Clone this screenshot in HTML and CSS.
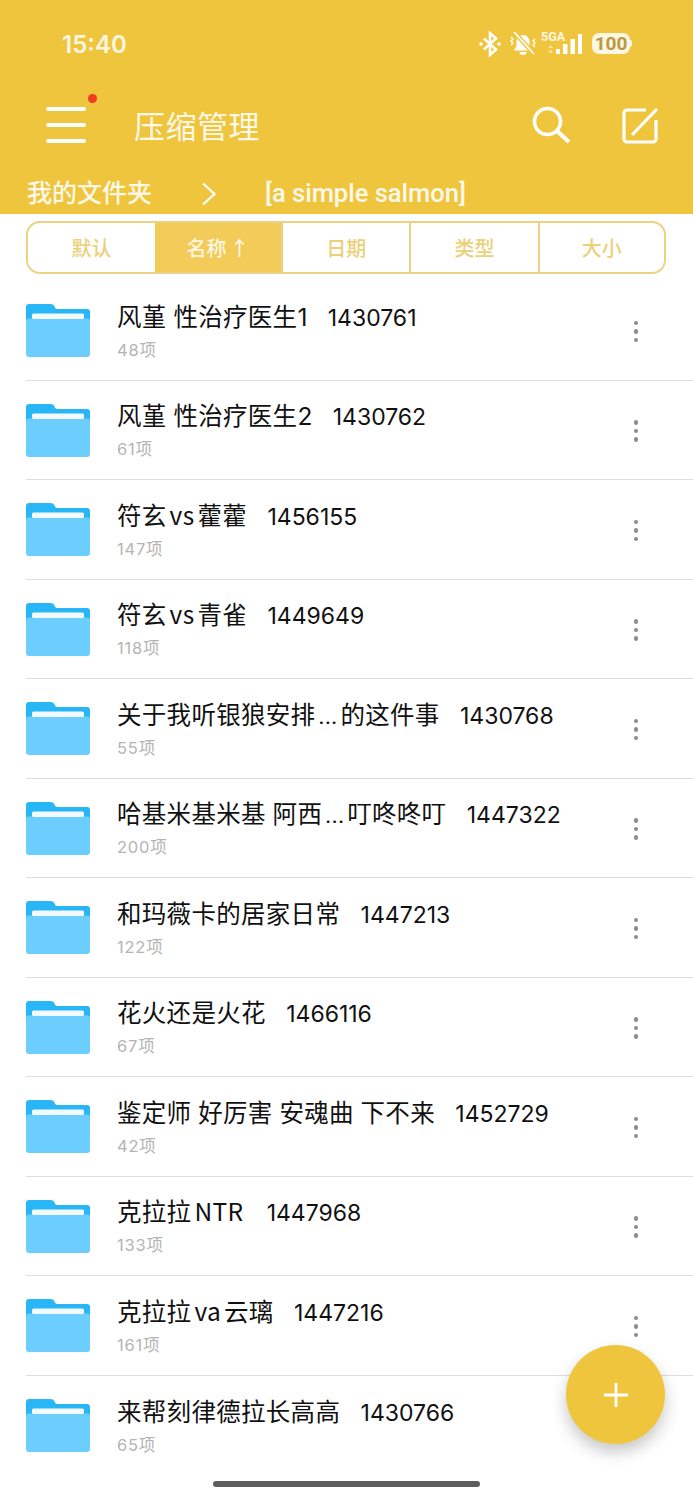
FILE: index.html
```html
<!DOCTYPE html>
<html lang="zh">
<head>
<meta charset="utf-8">
<title>压缩管理</title>
<link rel="stylesheet" href="styles.css">
</head>
<body>
<div class="page">
  <header class="header">
    <div class="status">
      <span class="time">15:40</span>
      <div class="status-icons">
        <svg class="ic-bt" viewBox="0 0 22 26" width="22" height="26"><path d="M5 7.500l12 11-6 5.500V2l6 5.500-12 11" fill="none" stroke="#fff" stroke-width="2.500"/><circle cx="2" cy="13" r="1.800" fill="#fff"/><circle cx="20" cy="13" r="1.800" fill="#fff"/></svg>
        <svg class="ic-bell" viewBox="0 0 28 24" width="28" height="24"><path d="M14 3c-4 0-6.500 3-6.500 6.500v4.500L5 18.500h18L20.500 14V9.500C20.500 6 18 3 14 3z" fill="#fff"/><path d="M10.500 20a3.500 3 0 007 0z" fill="#fff"/><path d="M5 0l20 22" stroke="#f0c53e" stroke-width="4.500"/><path d="M5 0l20 22" stroke="#fff" stroke-width="1.800"/><path d="M2 5l2 2-2 2 2 2-2 2M26 7l-2 2 2 2-2 2 2 2" fill="none" stroke="#fff" stroke-width="1.300"/></svg>
        <div class="signal">
          <span class="net">5GA</span>
          <svg viewBox="0 0 42 23" width="42" height="23"><path d="M7 16l2.500-3 2.500 3zM7 18.500l2.500 3 2.500-3z" fill="#f8e6ab"/><rect x="15" y="17" width="4" height="5" fill="#fff"/><rect x="22" y="12" width="4.500" height="10" fill="#fff"/><rect x="29.500" y="7" width="4.500" height="15" fill="#fff"/><rect x="37" y="2" width="4" height="20" fill="#fff"/></svg>
        </div>
        <div class="battery"><span class="battery-num">100</span></div>
      </div>
    </div>
    <div class="toolbar">
      <div class="menu">
        <span class="menu-line"></span><span class="menu-line"></span><span class="menu-line"></span>
        <span class="menu-dot"></span>
      </div>
      <h1 class="title">压缩管理</h1>
      <svg class="tool-search" viewBox="0 0 40 40" width="40" height="40"><circle cx="16.500" cy="16.500" r="13" fill="none" stroke="#fff" stroke-width="3.600"/><path d="M26 26l12 11" stroke="#fff" stroke-width="4"/></svg>
      <svg class="tool-edit" viewBox="0 0 37 37" width="37" height="37"><path d="M24 3H5a3 3 0 00-3 3v26a3 3 0 003 3h26a3 3 0 003-3V13" fill="none" stroke="#fff" stroke-width="3.200"/><path d="M35 2L10 28" stroke="#fff" stroke-width="3.200"/></svg>
    </div>
    <div class="crumbs">
      <span class="crumb-root">我的文件夹</span>
      <svg class="crumb-arrow" viewBox="0 0 16 24" width="16" height="24"><path d="M2 1.500l11.500 10.500L2 22.500" fill="none" stroke="#fff" stroke-width="2.200"/></svg>
      <span class="crumb-leaf">[a simple salmon]</span>
    </div>
  </header>

  <div class="tabs">
    <div class="tab">默认</div>
    <div class="tab tab-on">名称<span class="tab-arrow">↑</span></div>
    <div class="tab">日期</div>
    <div class="tab">类型</div>
    <div class="tab">大小</div>
  </div>

  <ul class="list">
    <li class="row"><svg class="folder" viewBox="0 0 64 54"><use href="#folder"/></svg><div class="info"><div class="name">风堇 性治疗医生<span class="ord">1</span>&nbsp;&nbsp;&nbsp;<span class="id">1430761</span></div><div class="count">48项</div></div><div class="more"><i></i><i></i><i></i></div></li>
    <li class="row"><svg class="folder" viewBox="0 0 64 54"><use href="#folder"/></svg><div class="info"><div class="name">风堇 性治疗医生<span class="ord">2</span>&nbsp;&nbsp;&nbsp;<span class="id">1430762</span></div><div class="count">61项</div></div><div class="more"><i></i><i></i><i></i></div></li>
    <li class="row"><svg class="folder" viewBox="0 0 64 54"><use href="#folder"/></svg><div class="info"><div class="name">符玄<span class="lat">vs</span>藿藿&nbsp;&nbsp;&nbsp;<span class="id">1456155</span></div><div class="count">147项</div></div><div class="more"><i></i><i></i><i></i></div></li>
    <li class="row"><svg class="folder" viewBox="0 0 64 54"><use href="#folder"/></svg><div class="info"><div class="name">符玄<span class="lat">vs</span>青雀&nbsp;&nbsp;&nbsp;<span class="id">1449649</span></div><div class="count">118项</div></div><div class="more"><i></i><i></i><i></i></div></li>
    <li class="row"><svg class="folder" viewBox="0 0 64 54"><use href="#folder"/></svg><div class="info"><div class="name">关于我听银狼安排<span class="ell">...</span>的这件事&nbsp;&nbsp;&nbsp;<span class="id">1430768</span></div><div class="count">55项</div></div><div class="more"><i></i><i></i><i></i></div></li>
    <li class="row"><svg class="folder" viewBox="0 0 64 54"><use href="#folder"/></svg><div class="info"><div class="name">哈基米基米基 阿西<span class="ell">...</span>叮咚咚叮&nbsp;&nbsp;&nbsp;<span class="id">1447322</span></div><div class="count">200项</div></div><div class="more"><i></i><i></i><i></i></div></li>
    <li class="row"><svg class="folder" viewBox="0 0 64 54"><use href="#folder"/></svg><div class="info"><div class="name">和玛薇卡的居家日常&nbsp;&nbsp;&nbsp;<span class="id">1447213</span></div><div class="count">122项</div></div><div class="more"><i></i><i></i><i></i></div></li>
    <li class="row"><svg class="folder" viewBox="0 0 64 54"><use href="#folder"/></svg><div class="info"><div class="name">花火还是火花&nbsp;&nbsp;&nbsp;<span class="id">1466116</span></div><div class="count">67项</div></div><div class="more"><i></i><i></i><i></i></div></li>
    <li class="row"><svg class="folder" viewBox="0 0 64 54"><use href="#folder"/></svg><div class="info"><div class="name">鉴定师 好厉害 安魂曲 下不来&nbsp;&nbsp;&nbsp;<span class="id">1452729</span></div><div class="count">42项</div></div><div class="more"><i></i><i></i><i></i></div></li>
    <li class="row"><svg class="folder" viewBox="0 0 64 54"><use href="#folder"/></svg><div class="info"><div class="name">克拉拉<span class="lat">NTR</span>&nbsp;&nbsp;&nbsp;<span class="id">1447968</span></div><div class="count">133项</div></div><div class="more"><i></i><i></i><i></i></div></li>
    <li class="row"><svg class="folder" viewBox="0 0 64 54"><use href="#folder"/></svg><div class="info"><div class="name">克拉拉<span class="lat">va</span>云璃&nbsp;&nbsp;&nbsp;<span class="id">1447216</span></div><div class="count">161项</div></div><div class="more"><i></i><i></i><i></i></div></li>
    <li class="row"><svg class="folder" viewBox="0 0 64 54"><use href="#folder"/></svg><div class="info"><div class="name">来帮刻律德拉长高高&nbsp;&nbsp;&nbsp;<span class="id">1430766</span></div><div class="count">65项</div></div></li>
  </ul>

  <div class="fab"><svg viewBox="0 0 26 26" width="26" height="26"><path d="M13 1v24M1 13h24" stroke="#fff" stroke-width="2.800"/></svg></div>
  <div class="home-bar"></div>

  <svg class="defs" width="0" height="0">
    <symbol id="folder" viewBox="0 0 64 54">
      <path d="M0 4a3 3 0 013-3h21c3 0 4 1 5 3.500 .5 1.500 1.500 1.500 3 1.500h29a3 3 0 013 3v10H0z" fill="#29b6f6"/>
      <path d="M0 18c0-1.500 1-2.500 2.500-2.500h59c1.500 0 2.500 1 2.500 2.500v33a3 3 0 01-3 3H3a3 3 0 01-3-3z" fill="#6cceff"/>
      <rect x="6" y="10.500" width="52" height="5.500" rx="1.500" fill="#f2faff"/>
    </symbol>
  </svg>
</div>
</body>
</html>
```
FILE: styles.css
```css
* { box-sizing: border-box; }
html, body { margin: 0; padding: 0; background: #fff; }
.page {
  position: relative;
  width: 693px;
  height: 1500px;
  overflow: hidden;
  font-family: "Noto Sans CJK SC", "Noto Sans", sans-serif;
  background: #fff;
}
.header {
  height: 214px;
  background: #f0c53e;
  color: #fff;
  display: flex;
  flex-direction: column;
}
.status {
  height: 87px;
  flex: none;
  display: flex;
  align-items: center;
  justify-content: space-between;
  padding: 0 61px 0 62px;
}
.time {
  margin-top: 2px;
  font-family: "Inter", "Roboto", sans-serif;
  font-size: 24px;
  font-weight: 600;
  color: #fdf6e0;
}
.status-icons { display: flex; align-items: center; }
.ic-bell { margin-left: 8px; }
.signal {
  position: relative;
  width: 42px;
  height: 23px;
  margin-left: 4px;
  display: flex;
  align-items: flex-end;
}
.net {
  position: absolute;
  left: 0;
  top: -1px;
  font-family: "Roboto", sans-serif;
  font-size: 12.500px;
  font-weight: 700;
  color: #fdf6e0;
  line-height: 12px;
}
.battery {
  position: relative;
  width: 38px;
  height: 21px;
  margin-left: 9px;
  margin-right: 2px;
  border-radius: 7px;
  background: #fdf6e0;
  display: flex;
  align-items: center;
  justify-content: center;
}
.battery::after {
  content: "";
  position: absolute;
  right: -2px;
  top: 7px;
  width: 2px;
  height: 7px;
  border-radius: 0 2px 2px 0;
  background: #fdf6e0;
}
.battery-num {
  font-family: "Roboto", sans-serif;
  font-size: 19px;
  font-weight: 700;
  color: #b79a45;
  line-height: 21px;
}
.toolbar {
  height: 76px;
  flex: none;
  display: flex;
  align-items: center;
  padding-left: 46px;
}
.menu {
  position: relative;
  width: 40px;
  height: 36px;
  display: flex;
  flex-direction: column;
  justify-content: space-between;
}
.menu-line { height: 4px; border-radius: 2px; background: #fff; }
.menu-dot {
  position: absolute;
  right: -11px;
  top: -13px;
  width: 9px;
  height: 9px;
  border-radius: 50%;
  background: #f53a22;
}
.title {
  margin: 0 0 0 48px;
  width: 397px;
  font-size: 31px;
  font-weight: 400;
  line-height: 40px;
  letter-spacing: 0.500px;
  color: #fdf8e8;
}
.tool-search { margin-right: 51px; }
.crumbs {
  flex: 1;
  display: flex;
  align-items: center;
  padding: 10px 0 0 27px;
  font-size: 25px;
  color: #fdf8e8;
}
.crumb-root { font-weight: 500; width: 174px; margin-bottom: 6px; }
.crumb-arrow { flex: none; }
.crumb-leaf {
  margin-left: 48px;
  margin-bottom: 2px;
  font-family: "Roboto", sans-serif;
  font-size: 25.500px;
  font-weight: 500;
}
.tabs {
  display: flex;
  margin: 7px 27px 0 26px;
  height: 53px;
  border: 2px solid #ecd384;
  border-radius: 14px;
  overflow: hidden;
}
.tab {
  flex: 1;
  display: flex;
  align-items: center;
  justify-content: center;
  font-size: 20px;
  font-weight: 500;
  color: #ecd07a;
  border-left: 2px solid #ecd384;
}
.tab:first-child { flex: none; width: 127px; border-left: 0; }
.tab:last-child { flex: none; width: 126.500px; }
.tab-on {
  background: #f2cb58;
  color: #fdf6e0;
  border-left: 0;
}
.tab-arrow { margin-left: 3px; }
.list {
  list-style: none;
  margin: 0;
  padding: 7px 0 0 0;
}
.row {
  position: relative;
  height: 99.500px;
  margin-left: 26px;
  display: flex;
  align-items: center;
  border-bottom: 1.500px solid #dedede;
}
.row:last-child { border-bottom: 0; }
.folder { flex: none; width: 64px; height: 54px; }
.info { margin-left: 27px; flex: 1; min-width: 0; }
.name {
  margin-top: 1px;
  font-size: 24.500px;
  line-height: 30px;
  letter-spacing: 0.300px;
  word-spacing: 1px;
  color: #111;
  white-space: nowrap;
}
.id { font-family: "Inter", "Roboto", sans-serif; font-size: 23px; letter-spacing: 0; }
.ord { font-family: "Inter", "Roboto", sans-serif; font-size: 24.500px; letter-spacing: 0; }
.lat { margin: 0 3px; }
.ell {
  display: inline-block;
  width: 25px;
  text-align: center;
  font-family: "Roboto", sans-serif;
  letter-spacing: 0;
}
.count {
  font-family: "Inter", "Noto Sans CJK SC", sans-serif;
  font-size: 16.500px;
  line-height: 22px;
  letter-spacing: 0.800px;
  margin-top: 6px;
  color: #b4b4b4;
}
.more {
  display: flex;
  flex-direction: column;
  gap: 4px;
  margin-right: 55px;
  margin-top: 2px;
}
.more i { display: block; width: 4.500px; height: 4.500px; border-radius: 50%; background: #8c8c8c; }
.fab {
  position: absolute;
  left: 566px;
  top: 1345px;
  width: 99px;
  height: 99px;
  border-radius: 50%;
  background: #f0c53e;
  box-shadow: 0 8px 16px rgba(0, 0, 0, 0.22);
  display: flex;
  align-items: center;
  justify-content: center;
}
.home-bar {
  position: absolute;
  left: 213px;
  top: 1481px;
  width: 267px;
  height: 6px;
  border-radius: 3px;
  background: #5c5c5c;
}
.defs { position: absolute; }
```
